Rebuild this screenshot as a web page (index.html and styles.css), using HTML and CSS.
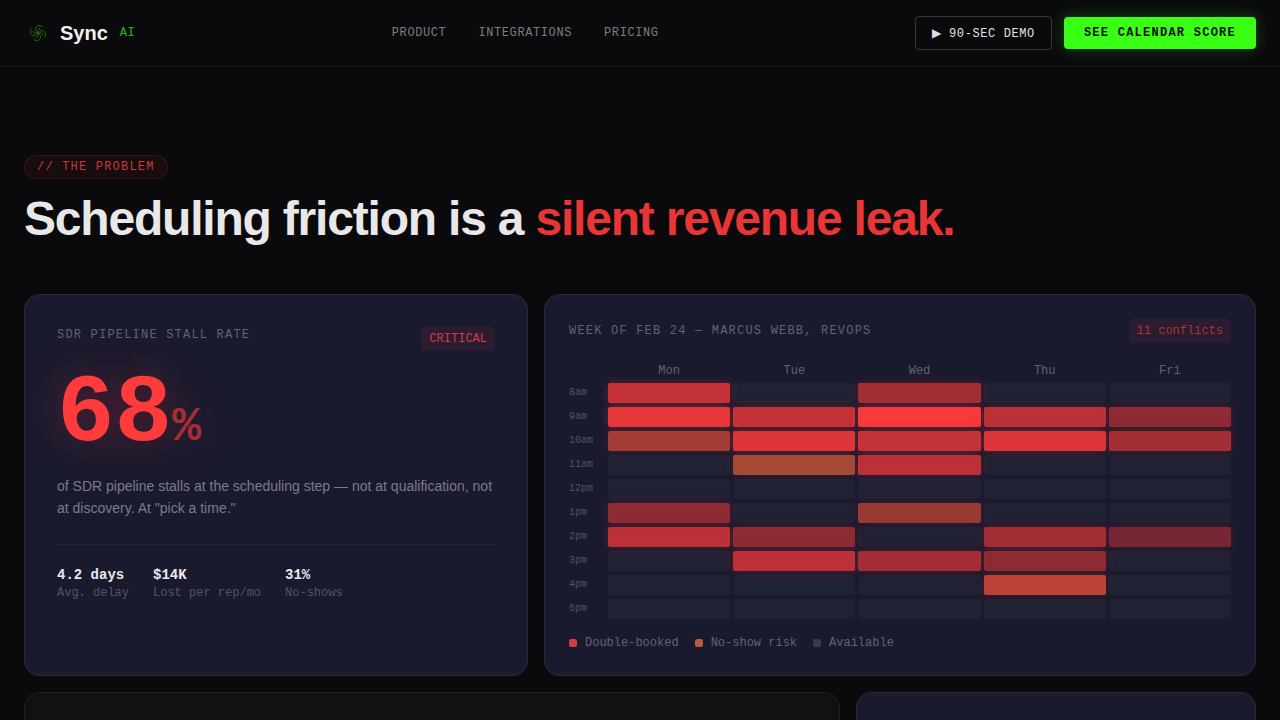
FILE: index.html
```html
<!DOCTYPE html>
<html>
  <head>
    <title>SyncAI</title>
    <meta name="viewport" content="width=device-width, initial-scale=1.0" />
    <link rel="stylesheet" href="styles.css">
  </head>
  <body>
    <nav class="nav">
      <div class="brand">
        <svg class="brand-icon" viewBox="0 0 20 20" fill="none">
          <g id="blades">
            <path d="M10 10C7 8 6.500 5 9 3C11 2 13 2.500 14.500 4"/>
            <path d="M10 10C9.500 7.500 10 5.500 12 5"/>
            <path transform="rotate(90 10 10)" d="M10 10C7 8 6.500 5 9 3C11 2 13 2.500 14.500 4"/>
            <path transform="rotate(90 10 10)" d="M10 10C9.500 7.500 10 5.500 12 5"/>
            <path transform="rotate(180 10 10)" d="M10 10C7 8 6.500 5 9 3C11 2 13 2.500 14.500 4"/>
            <path transform="rotate(180 10 10)" d="M10 10C9.500 7.500 10 5.500 12 5"/>
            <path transform="rotate(270 10 10)" d="M10 10C7 8 6.500 5 9 3C11 2 13 2.500 14.500 4"/>
            <path transform="rotate(270 10 10)" d="M10 10C9.500 7.500 10 5.500 12 5"/>
          </g>
        </svg>
        <span class="brand-name">Sync</span>
        <span class="brand-tag">AI</span>
      </div>
      <div class="nav-links">
        <a href="#">PRODUCT</a>
        <a href="#">INTEGRATIONS</a>
        <a href="#">PRICING</a>
      </div>
      <div class="nav-actions">
        <button class="btn-ghost"><span class="play">▶</span> 90-SEC DEMO</button>
        <button class="btn-cta">SEE CALENDAR SCORE</button>
      </div>
    </nav>

    <main class="section">
      <span class="pill">// THE PROBLEM</span>
      <h1 class="headline">Scheduling friction is a <span class="red">silent revenue leak.</span></h1>

      <div class="row-top">
        <section class="card stall">
          <div class="stall-head">
            <span class="label">SDR PIPELINE STALL RATE</span>
            <span class="badge">CRITICAL</span>
          </div>
          <div class="big-num">68<span class="pct">%</span></div>
          <p class="stall-text">of SDR pipeline stalls at the scheduling step — not at qualification, not at discovery. At "pick a time."</p>
          <div class="stats">
            <div><b>4.2 days</b><span>Avg. delay</span></div>
            <div><b>$14K</b><span>Lost per rep/mo</span></div>
            <div><b>31%</b><span>No-shows</span></div>
          </div>
        </section>

        <section class="card week">
          <div class="week-head">
            <span class="label">WEEK OF FEB 24 — MARCUS WEBB, REVOPS</span>
            <span class="badge badge-dim">11 conflicts</span>
          </div>
          <div class="heat">
            <span></span><span class="day">Mon</span><span class="day">Tue</span><span class="day">Wed</span><span class="day">Thu</span><span class="day">Fri</span>

            <span class="time">8am</span><i class="bad o75"></i><i></i><i class="bad o60"></i><i></i><i></i>
            <span class="time">9am</span><i class="bad o90"></i><i class="bad o75"></i><i class="bad o95"></i><i class="bad o70"></i><i class="bad o50"></i>
            <span class="time">10am</span><i class="risk o60"></i><i class="bad o85"></i><i class="bad o75"></i><i class="bad o85"></i><i class="bad o60"></i>
            <span class="time">11am</span><i></i><i class="warm o60"></i><i class="bad o70"></i><i></i><i></i>
            <span class="time">12pm</span><i></i><i></i><i></i><i></i><i></i>
            <span class="time">1pm</span><i class="bad o50"></i><i></i><i class="risk o55"></i><i></i><i></i>
            <span class="time">2pm</span><i class="bad o70"></i><i class="bad o50"></i><i></i><i class="bad o60"></i><i class="bad o40"></i>
            <span class="time">3pm</span><i></i><i class="bad o70"></i><i class="bad o60"></i><i class="bad o50"></i><i></i>
            <span class="time">4pm</span><i></i><i></i><i></i><i class="risk o70"></i><i></i>
            <span class="time">5pm</span><i></i><i></i><i></i><i></i><i></i>
          </div>
          <div class="legend">
            <span><u class="dot dot-bad"></u>Double-booked</span>
            <span><u class="dot dot-risk"></u>No-show risk</span>
            <span><u class="dot dot-free"></u>Available</span>
          </div>
        </section>
      </div>

      <div class="row-bottom">
        <section class="card card-dark"></section>
        <section class="card"></section>
      </div>
    </main>
  </body>
</html>
```

FILE: styles.css
```css
* {
  box-sizing: border-box;
}
body {
  margin: 0;
  height: 100vh;
  overflow: hidden;
  background-color: #0a0a0c;
  color: #e8e8e8;
  font-family: "Liberation Sans", Arial, sans-serif;
}
.nav {
  display: flex;
  align-items: center;
  justify-content: space-between;
  height: 67px;
  padding: 0 24px;
  border-bottom: 1px solid rgba(255, 255, 255, 0.05);
}
.brand {
  display: flex;
  align-items: center;
}
.brand-icon {
  width: 20px;
  height: 20px;
  margin: 0 12px 0 4px;
  stroke: #39ff14;
  stroke-width: 0.9;
  opacity: 0.45;
}
.brand-name {
  font-size: 20px;
  font-weight: 700;
  color: #f0f0f0;
}
.brand-tag {
  margin-left: 12px;
  font-family: "Liberation Mono", monospace;
  font-size: 12px;
  letter-spacing: 0.05em;
  color: #39ff14;
  opacity: 0.7;
}
.nav-links {
  display: flex;
  gap: 32px;
}
.nav-links a {
  font-family: "Liberation Mono", monospace;
  font-size: 12px;
  letter-spacing: 0.05em;
  color: #7c7c84;
  text-decoration: none;
}
.nav-actions {
  display: flex;
  align-items: center;
  gap: 12px;
}
.btn-ghost {
  height: 34px;
  padding: 0 16px;
  font-family: "Liberation Mono", monospace;
  font-size: 12px;
  letter-spacing: 0.05em;
  color: #e0e0e0;
  background: transparent;
  border: 1px solid rgba(255, 255, 255, 0.18);
  border-radius: 4px;
}
.play {
  font-family: "DejaVu Sans", sans-serif;
  letter-spacing: 0;
}
.btn-cta {
  height: 32px;
  padding: 0 20px;
  font-family: "Liberation Mono", monospace;
  font-size: 12px;
  font-weight: 700;
  letter-spacing: 1.25px;
  color: #0a0a0c;
  background: #39ff14;
  border: 0;
  border-radius: 4px;
  box-shadow: 0 0 16px rgba(57, 255, 20, 0.25);
}
.section {
  padding: 88px 24px 0;
}
.pill {
  display: inline-block;
  padding: 4px 12px;
  font-family: "Liberation Mono", monospace;
  font-size: 12px;
  line-height: 14px;
  letter-spacing: 0.1em;
  color: #c23c40;
  background: rgba(255, 59, 59, 0.06);
  border: 1px solid rgba(255, 59, 59, 0.15);
  border-radius: 100px;
}
.headline {
  margin: 13px 0 49px;
  font-size: 48px;
  line-height: 53px;
  font-weight: 700;
  letter-spacing: -1.2px;
}
.red {
  color: #e83535;
}
.row-top {
  display: grid;
  grid-template-columns: 504px 1fr;
  gap: 16px;
}
.row-bottom {
  display: grid;
  grid-template-columns: 1fr 400px;
  gap: 16px;
  margin-top: 16px;
}
.row-bottom .card {
  height: 200px;
}
.card {
  background: #1a1a2e;
  border: 1px solid rgba(255, 255, 255, 0.07);
  border-radius: 16px;
}
.card-dark {
  background: #111114;
}
.stall {
  height: 382px;
  padding: 32px;
}
.stall-head {
  display: flex;
  justify-content: space-between;
  align-items: flex-start;
}
.label {
  font-family: "Liberation Mono", monospace;
  font-size: 12px;
  line-height: 16px;
  letter-spacing: 0.1em;
  color: #62626f;
}
.badge {
  padding: 5px 8px;
  font-family: "Liberation Mono", monospace;
  font-size: 12px;
  line-height: 14px;
  color: #d23c44;
  background: rgba(255, 59, 59, 0.08);
  border-radius: 4px;
}
.badge-dim {
  color: #a93339;
}
.big-num {
  margin-top: 22px;
  font-family: "Liberation Mono", monospace;
  font-size: 96px;
  line-height: 83px;
  font-weight: 700;
  color: #ff3b3b;
  text-shadow: 0 0 40px rgba(255, 59, 59, 0.3);
}
.pct {
  font-size: 48px;
  opacity: 0.6;
}
.stall-text {
  margin: 6px 0 0;
  font-size: 14px;
  line-height: 22px;
  color: #7a7a88;
}
.stats {
  display: flex;
  gap: 24px;
  margin-top: 25px;
  padding-top: 22px;
  border-top: 1px solid rgba(255, 255, 255, 0.05);
  font-family: "Liberation Mono", monospace;
}
.stats b {
  display: block;
  font-size: 14px;
  line-height: 17px;
  color: #e8e8e8;
}
.stats span {
  display: block;
  margin-top: 1px;
  font-size: 12px;
  line-height: 17px;
  color: #54545f;
}
.week {
  height: 382px;
  padding: 24px;
}
.week-head {
  display: flex;
  justify-content: space-between;
  align-items: center;
}
.heat {
  display: grid;
  grid-template-columns: 36px repeat(5, 1fr);
  grid-template-rows: 16px;
  grid-auto-rows: 20px;
  gap: 4px 3px;
  margin-top: 20px;
}
.day {
  font-family: "Liberation Mono", monospace;
  font-size: 12px;
  line-height: 17px;
  text-align: center;
  color: #62626f;
}
.time {
  font-family: "Liberation Mono", monospace;
  font-size: 10px;
  line-height: 19px;
  color: #54545f;
}
.heat i {
  display: block;
  background: rgba(255, 255, 255, 0.03);
  border-radius: 2px;
}
.heat i.bad {
  background: #ff3b3b;
  box-shadow: 0 0 8px rgba(255, 59, 59, 0.4);
}
.heat i.risk {
  background: #ff5339;
  box-shadow: 0 0 8px rgba(255, 59, 59, 0.3);
}
.heat i.warm {
  background: #ff6b3b;
  box-shadow: 0 0 8px rgba(255, 59, 59, 0.3);
}
.o40 { opacity: 0.4; }
.o50 { opacity: 0.5; }
.o55 { opacity: 0.55; }
.o60 { opacity: 0.6; }
.o70 { opacity: 0.7; }
.o75 { opacity: 0.75; }
.o85 { opacity: 0.85; }
.o90 { opacity: 0.9; }
.o95 { opacity: 0.96; }
.legend {
  display: flex;
  gap: 16px;
  margin-top: 17px;
  font-family: "Liberation Mono", monospace;
  font-size: 12px;
  line-height: 14px;
  color: #62626f;
}
.legend span {
  display: flex;
  align-items: center;
  gap: 8px;
}
.dot {
  display: block;
  width: 8px;
  height: 8px;
  border-radius: 2px;
}
.dot-bad {
  background: #d23c44;
}
.dot-risk {
  background: #b85a35;
}
.dot-free {
  background: #3a3a4c;
}
```
